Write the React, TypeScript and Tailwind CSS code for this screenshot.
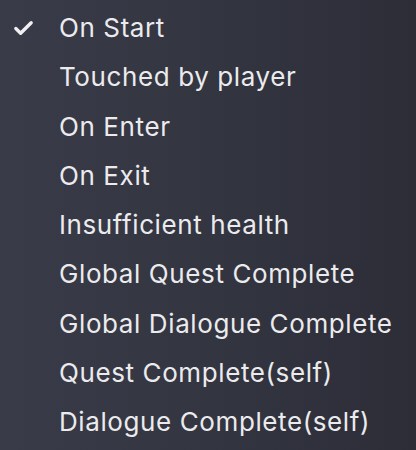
import { Check } from 'lucide-react';

const TRIGGERS = [
  'On Start',
  'Touched by player',
  'On Enter',
  'On Exit',
  'Insufficient health',
  'Global Quest Complete',
  'Global Dialogue Complete',
  'Quest Complete(self)',
  'Dialogue Complete(self)',
];

export default function App() {
  const selected = 'On Start';
  return (
    <div
      className="w-[416px] h-[450px] overflow-hidden bg-gradient-to-r from-[#393b48] via-[#333541] to-[#2c2d37]"
      style={{ fontFamily: 'Inter, "Noto Sans", sans-serif' }}
    >
      <ul className="pt-[3.5px]">
        {TRIGGERS.map((t) => (
          <li key={t} className="h-[49.25px] flex items-center">
            <span className="w-[59px] flex pl-[12px]">
              {t === selected && <Check size={23} strokeWidth={3.5} className="text-[#f0f0f2]" />}
            </span>
            <span className="text-[26px] leading-none tracking-[0.6px] text-[#ebebed] whitespace-nowrap">
              {t}
            </span>
          </li>
        ))}
      </ul>
    </div>
  );
}
